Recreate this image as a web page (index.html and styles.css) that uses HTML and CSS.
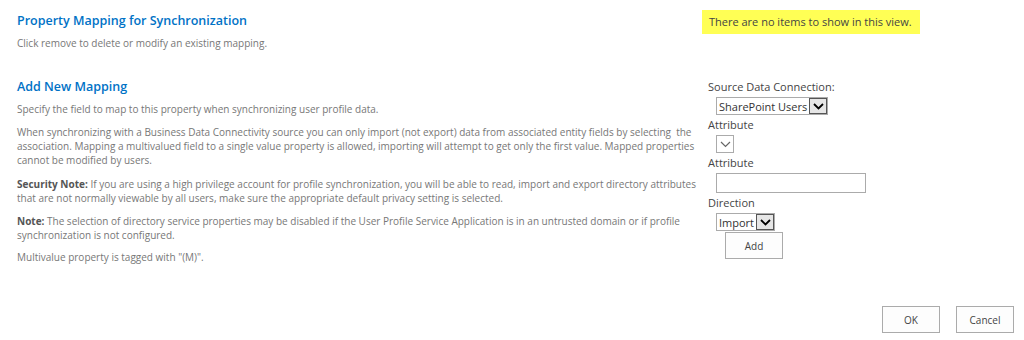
FILE: index.html
```html
<!DOCTYPE html>
<html lang="en">
<head>
    <meta charset="UTF-8">
    <title>Property Mapping for Synchronization</title>
    <link rel="stylesheet" href="styles.css">
</head>
<body>

    <div class="Pagina">
        <div class="Fila Cabecera">
            <div class="Izquierda">
                <h2 class="Titulo">Property Mapping for Synchronization</h2>
                <p class="Desc">Click remove to delete or modify an existing mapping.</p>
            </div>
            <div class="Derecha">
                <div class="Aviso">There are no items to show in this view.</div>
            </div>
        </div>

        <div class="Fila Seccion">
            <div class="Izquierda">
                <h2 class="Titulo">Add New Mapping</h2>
                <p class="Desc">Specify the field to map to this property when synchronizing user profile data.</p>
                <p class="Desc">When synchronizing with a Business Data Connectivity source you can only import (not export) data from associated entity fields by selecting &nbsp;the association. Mapping a multivalued field to a single value property is allowed, importing will attempt to get only the first value. Mapped properties cannot be modified by users.</p>
                <p class="Desc Nota"><b>Security Note:</b> If you are using a high privilege account for profile synchronization, you will be able to read, import and export directory attributes that are not normally viewable by all users, make sure the appropriate default privacy setting is selected.</p>
                <p class="Desc"><b>Note:</b> The selection of directory service properties may be disabled if the User Profile Service Application is in an untrusted domain or if profile synchronization is not configured.</p>
                <p class="Desc Ultima">Multivalue property is tagged with "(M)".</p>
            </div>
            <div class="Derecha Formulario">
                <div class="Etiqueta">Source Data Connection:</div>
                <div class="Selector">
                    <span class="Valor">SharePoint Users</span>
                    <span class="Flecha Oscura"><svg width="11" height="7" viewBox="0 0 11 7"><path d="M1 1 L5.5 5.5 L10 1" fill="none" stroke="#000" stroke-width="1.8"/></svg></span>
                </div>
                <div class="Etiqueta">Attribute</div>
                <div class="Selector">
                    <span class="Flecha"><svg width="11" height="7" viewBox="0 0 11 7"><path d="M1 1 L5.5 5.5 L10 1" fill="none" stroke="#666" stroke-width="1.2"/></svg></span>
                </div>
                <div class="Etiqueta">Attribute</div>
                <input class="Campo" type="text">
                <div class="Etiqueta">Direction</div>
                <div class="Selector">
                    <span class="Valor">Import</span>
                    <span class="Flecha Oscura"><svg width="11" height="7" viewBox="0 0 11 7"><path d="M1 1 L5.5 5.5 L10 1" fill="none" stroke="#000" stroke-width="1.8"/></svg></span>
                </div>
                <button class="Boton BotonAdd">Add</button>
            </div>
        </div>

        <div class="Pie">
            <button class="Boton">OK</button>
            <button class="Boton">Cancel</button>
        </div>
    </div>

</body>
</html>
```
FILE: styles.css
```css
body {
    margin: 0;
    font-family: 'Open Sans', sans-serif;
    background: #fff;
    color: #777;
}

.Pagina {
    padding: 9px 10px 0 17px;
}

.Fila {
    display: flex;
}

.Izquierda {
    width: 685px;
}

.Derecha {
    flex: 1;
}

.Titulo {
    margin: 0;
    font-size: 12.5px;
    font-weight: 600;
    color: #0072c6;
    line-height: 20px;
}

.Desc {
    margin: 9px 0 0;
    font-size: 10px;
    line-height: 14px;
}

.Desc b {
    color: #555;
}

.Cabecera .Titulo {
    margin-top: 2px;
}

.Cabecera .Desc {
    margin-top: 5px;
}

.Seccion .Titulo + .Desc {
    margin-top: 5px;
}

.Desc.Nota {
    margin-top: 10px;
}

.Desc.Ultima {
    margin-top: 8px;
}

.Aviso {
    display: inline-block;
    background: #ffff55;
    color: #444;
    font-size: 11px;
    padding: 4px 8px 4px 7px;
    line-height: 16px;
}

.Seccion {
    margin-top: 27px;
}

.Formulario {
    padding-left: 6px;
    font-size: 11px;
    color: #444;
}

.Etiqueta {
    line-height: 20px;
}

.Selector {
    display: flex;
    align-items: center;
    width: fit-content;
    height: 18px;
    margin-left: 8px;
    border: 1px solid #ababab;
    box-sizing: border-box;
    color: #333;
}

.Valor {
    padding: 0 2px;
}

.Flecha {
    display: flex;
    align-items: center;
    justify-content: center;
    width: 16px;
    height: 16px;
    border-left: 1px solid #ababab;
}

.Flecha.Oscura {
    border: 1px solid #555;
    background: #e6e6e6;
    height: 14px;
}

.Selector .Flecha:first-child {
    border-left: none;
}

.Campo {
    display: block;
    margin-left: 8px;
    width: 150px;
    height: 20px;
    box-sizing: border-box;
    border: 1px solid #ababab;
}

.Boton {
    font-family: 'Open Sans', sans-serif;
    font-size: 10px;
    color: #444;
    background: #fdfdfd;
    border: 1px solid #ababab;
    width: 58px;
    height: 27px;
}

.BotonAdd {
    display: block;
    margin-left: 17px;
    margin-top: 1px;
}

.Pie {
    display: flex;
    justify-content: flex-end;
    gap: 16px;
    margin-top: 42px;
}
```
